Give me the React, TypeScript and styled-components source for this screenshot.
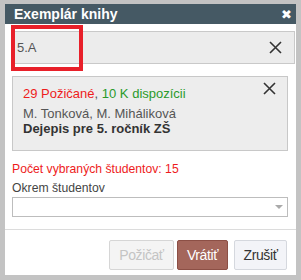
import React from "react";
import styled, { createGlobalStyle } from "styled-components";

const Global = createGlobalStyle`
  html, body { margin: 0; padding: 0; background: #c3c3c3; }
  body { font-family: "Liberation Sans", Arial, sans-serif; }
  * { box-sizing: border-box; }
`;

const Page = styled.div`
  padding: 4px 5px 5px 5px;
`;

const Dialog = styled.div`
  position: relative;
  width: 291px;
  height: 271px;
  background: #fff;
  display: flex;
  flex-direction: column;
`;

const Header = styled.div`
  height: 20px;
  background: #455964;
  display: flex;
  align-items: center;
  justify-content: space-between;
  padding: 0 4px 0 9px;
`;

const Title = styled.div`
  color: #fff;
  font-weight: bold;
  font-size: 14px;
`;

const HeaderClose = styled.div`
  color: #fff;
  font-size: 13px;
  font-weight: bold;
  line-height: 1;
  font-family: "DejaVu Sans", sans-serif;
`;

const Body = styled.div`
  padding: 7px 0 0 7px;
  display: flex;
  flex-direction: column;
`;

const SearchBox = styled.div`
  width: 283px;
  height: 33px;
  background: #ececec;
  border: 1px solid #c9c9c9;
  display: flex;
  align-items: center;
  justify-content: space-between;
  padding: 0 12px 0 4px;
  font-size: 13px;
  color: #555;
`;

const Card = styled.div`
  margin-top: 12px;
  width: 276px;
  height: 75px;
  background: #ededed;
  border: 1px solid #c8c8c8;
  position: relative;
  padding: 9px 10px;
  font-size: 13px;
  line-height: 15px;
`;

const CardClose = styled.div`
  position: absolute;
  top: 5px;
  right: 11px;
`;

const Line = styled.div<{ $bold?: boolean; $gap?: number }>`
  color: ${(p) => (p.$bold ? "#333" : "#555")};
  font-weight: ${(p) => (p.$bold ? "bold" : "normal")};
  margin-top: ${(p) => p.$gap ?? 0}px;
`;

const Red = styled.span`
  color: #ee1c1c;
`;
const Green = styled.span`
  color: #2a9a2a;
`;

const Count = styled.div`
  margin-top: 10px;
  color: #ee1c1c;
  font-size: 12.2px;
  line-height: 16px;
`;

const Label = styled.div`
  margin-top: 3px;
  color: #444;
  font-size: 12.2px;
  line-height: 16px;
`;

const Select = styled.div`
  margin-top: 1px;
  width: 276px;
  height: 20px;
  border: 1px solid #bdbdbd;
  display: flex;
  align-items: center;
  justify-content: flex-end;
  padding-right: 4px;
`;

const Caret = styled.div`
  width: 0;
  height: 0;
  border-left: 4px solid transparent;
  border-right: 4px solid transparent;
  border-top: 4px solid #aaa;
`;

const Divider = styled.div`
  margin-top: 12px;
  height: 1px;
  background: #dcdcdc;
`;

const Footer = styled.div`
  display: flex;
  justify-content: flex-end;
  padding: 10px 9px 0 0;
`;

const Button = styled.div<{ $kind: "disabled" | "primary" | "default"; $w: number; $gap: number }>`
  width: ${(p) => p.$w}px;
  height: 30px;
  margin-left: ${(p) => p.$gap}px;
  display: flex;
  align-items: center;
  justify-content: center;
  font-size: 14px;
  letter-spacing: -0.4px;
  border-radius: 2px;
  border: 1px solid
    ${(p) => (p.$kind === "primary" ? "#8c4f45" : p.$kind === "disabled" ? "#d6d6d6" : "#d5d8de")};
  background: ${(p) => (p.$kind === "primary" ? "#a4665b" : p.$kind === "disabled" ? "#f4f4f4" : "#f3f4f8")};
  color: ${(p) => (p.$kind === "primary" ? "#fff" : p.$kind === "disabled" ? "#c4c4c4" : "#333")};
`;

const Highlight = styled.div`
  position: absolute;
  left: 6px;
  top: 21px;
  width: 72px;
  height: 46px;
  border: 4px solid #e8202a;
  pointer-events: none;
`;

const XIcon = ({ size = 13 }: { size?: number }) => (
  <svg width={size} height={size} viewBox="0 0 13 13">
    <path d="M1 1 L12 12 M12 1 L1 12" stroke="#333" strokeWidth="1.6" fill="none" />
  </svg>
);

export default function App() {
  return (
    <>
      <Global />
      <Page>
        <Dialog>
          <Header>
            <Title>Exemplár knihy</Title>
            <HeaderClose>✖</HeaderClose>
          </Header>
          <Body>
            <SearchBox>
              <span>5.A</span>
              <XIcon size={13} />
            </SearchBox>
            <Card>
              <CardClose>
                <XIcon size={13} />
              </CardClose>
              <Line>
                <Red>29 Požičané</Red>, <Green>10 K dispozícii</Green>
              </Line>
              <Line $gap={5}>M. Tonková, M. Miháliková</Line>
              <Line $bold>Dejepis pre 5. ročník ZŠ</Line>
            </Card>
            <Count>Počet vybraných študentov: 15</Count>
            <Label>Okrem študentov</Label>
            <Select>
              <Caret />
            </Select>
          </Body>
          <Divider />
          <Footer>
            <Button $kind="disabled" $w={65} $gap={0}>Požičať</Button>
            <Button $kind="primary" $w={51} $gap={3}>Vrátiť</Button>
            <Button $kind="default" $w={53} $gap={6}>Zrušiť</Button>
          </Footer>
          <Highlight />
        </Dialog>
      </Page>
    </>
  );
}
